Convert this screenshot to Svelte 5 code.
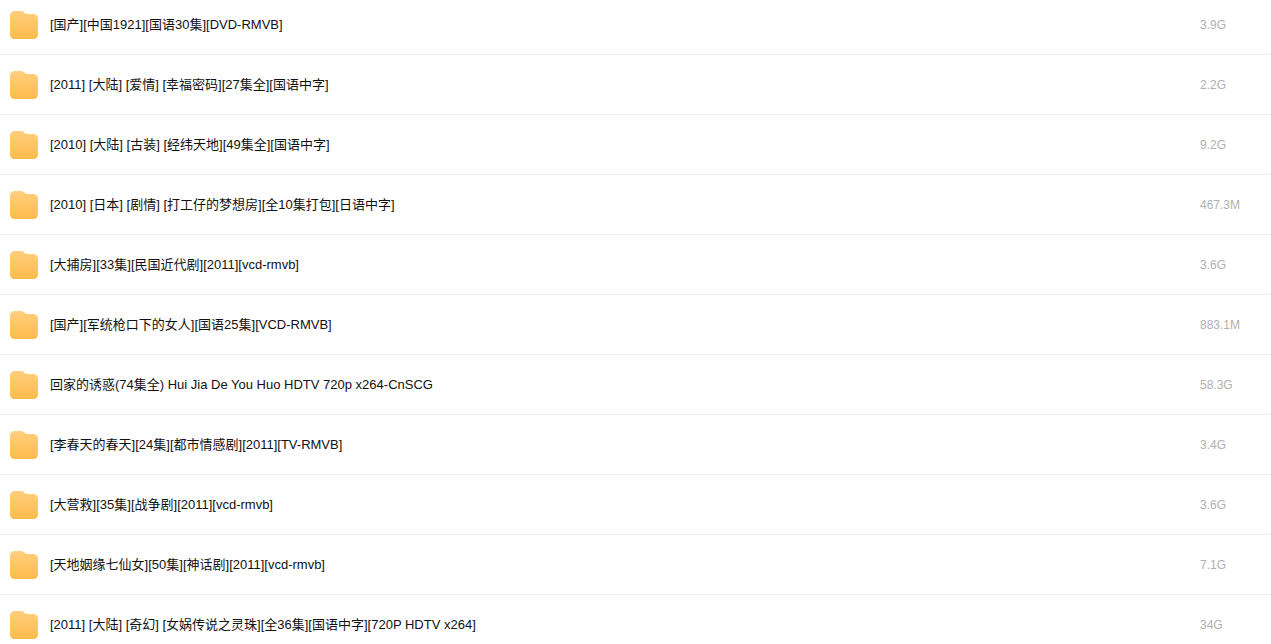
<script>
  const files = [
    { name: '[国产][中国1921][国语30集][DVD-RMVB]', size: '3.9G' },
    { name: '[2011] [大陆] [爱情] [幸福密码][27集全][国语中字]', size: '2.2G' },
    { name: '[2010] [大陆] [古装] [经纬天地][49集全][国语中字]', size: '9.2G' },
    { name: '[2010] [日本] [剧情] [打工仔的梦想房][全10集打包][日语中字]', size: '467.3M' },
    { name: '[大捕房][33集][民国近代剧][2011][vcd-rmvb]', size: '3.6G' },
    { name: '[国产][军统枪口下的女人][国语25集][VCD-RMVB]', size: '883.1M' },
    { name: '回家的诱惑(74集全) Hui Jia De You Huo HDTV 720p x264-CnSCG', size: '58.3G' },
    { name: '[李春天的春天][24集][都市情感剧][2011][TV-RMVB]', size: '3.4G' },
    { name: '[大营救][35集][战争剧][2011][vcd-rmvb]', size: '3.6G' },
    { name: '[天地姻缘七仙女][50集][神话剧][2011][vcd-rmvb]', size: '7.1G' },
    { name: '[2011] [大陆] [奇幻] [女娲传说之灵珠][全36集][国语中字][720P HDTV x264]', size: '34G' }
  ];
</script>

<svg class="defs" width="0" height="0" aria-hidden="true">
  <linearGradient id="folder-fill" x1="0" y1="0" x2="0" y2="1">
    <stop offset="0" stop-color="#ffcf7d" />
    <stop offset="1" stop-color="#ffbb4b" />
  </linearGradient>
</svg>

<ul class="files">
  {#each files as file}
    <li class="row">
      <svg class="folder" viewBox="0 0 28 28" aria-hidden="true">
        <path
          fill="url(#folder-fill)"
          d="M5 0H10.5C12.2 0 13.2 .7 14.2 1.6C15.2 2.6 16 3 17.4 3H23C26 3 28 5 28 8V23C28 26 26 28 23 28H5C2 28 0 26 0 23V5C0 2 2 0 5 0Z"
        />
      </svg>
      <span class="name">{file.name}</span>
      <span class="size">{file.size}</span>
    </li>
  {/each}
</ul>

<style>
  :global(body) {
    background: #fff;
  }

  .defs {
    position: absolute;
  }

  .files {
    margin: 0;
    padding: 0;
    list-style: none;
    font-family: 'Liberation Sans', Arial, 'Noto Sans CJK SC', sans-serif;
  }

  .row {
    display: flex;
    align-items: flex-start;
    padding: 16px 10px 15px;
    border-bottom: 1px solid #ededed;
  }

  .row:first-child {
    padding-top: 11px;
  }

  .row:last-child {
    padding-bottom: 0;
    border-bottom: 0;
  }

  .folder {
    flex: none;
    width: 28px;
    height: 28px;
    margin-right: 12px;
  }

  .name {
    flex: 1;
    min-width: 0;
    overflow: hidden;
    white-space: nowrap;
    text-overflow: ellipsis;
    font-size: 13px;
    line-height: 28px;
    color: #111;
  }

  .size {
    flex: none;
    width: 61px;
    font-size: 12px;
    line-height: 28px;
    color: #b0b0b0;
  }
</style>
